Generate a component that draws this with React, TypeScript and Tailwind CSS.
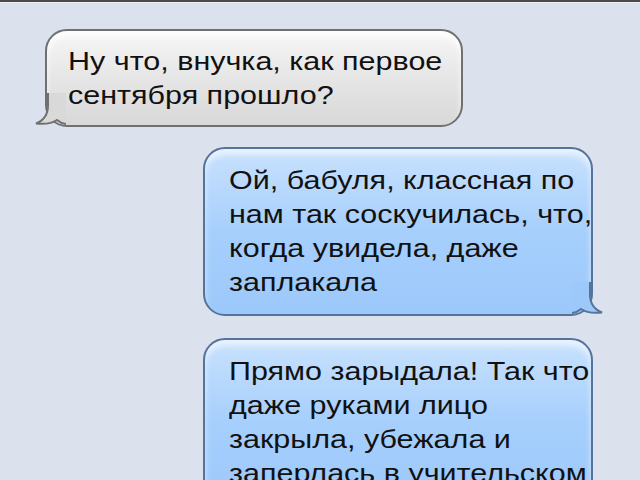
import React from 'react';

const font = { fontFamily: '"Liberation Sans", Arial, sans-serif' };

const GrayTail = () => (
  <svg className="absolute -left-[13px] bottom-0" width="32" height="32" viewBox="0 0 32 32">
    <path d="M14 0 L14 12 Q14 26 2 30.5 Q16 32 23 27 Q27 30.5 32 31 L32 0 Z" fill="#d9d9d9" />
    <path d="M14 0 L14 12 Q14 26 2 30.5 Q16 32 23 27 Q27 30.5 32 31" fill="none" stroke="#707070" strokeWidth="2" />
  </svg>
);

const BlueTail = () => (
  <svg className="absolute -right-[13px] bottom-0" width="32" height="32" viewBox="0 0 32 32">
    <path d="M18 0 L18 12 Q18 26 30 30.5 Q16 32 9 27 Q5 30.5 0 31 L0 0 Z" fill="#9dc8fa" />
    <path d="M18 0 L18 12 Q18 26 30 30.5 Q16 32 9 27 Q5 30.5 0 31" fill="none" stroke="#56739c" strokeWidth="2" />
  </svg>
);

const Lines = ({ lines }: { lines: string[] }) => (
  <div className="origin-left scale-x-[1.22] text-[25px] leading-[34px] text-[#111] whitespace-nowrap" style={font}>
    {lines.map((l, i) => (
      <div key={i}>{l}</div>
    ))}
  </div>
);

export default function App() {
  return (
    <div className="h-[480px] w-[640px] overflow-hidden bg-[#dce2ed]">
      <div className="h-[2px] bg-[#4b4b4b]" />
      <div className="h-[1px] bg-[#eef0f4]" />
      <div className="flex flex-col pt-[26px]">
        {/* incoming */}
        <div className="relative ml-[45px] w-[418px] rounded-[22px] border-2 border-[#707070] bg-gradient-to-b from-[#f6f6f6] via-[#e6e6e6] to-[#d8d8d8] pl-[21px] pt-[13px] pb-[13px] shadow-[inset_0_6px_6px_rgba(255,255,255,0.8)]">
          <Lines lines={['Ну что, внучка, как первое', 'сентября прошло?']} />
          <GrayTail />
        </div>

        {/* outgoing */}
        <div className="relative ml-[203px] mt-[20px] w-[390px] rounded-[22px] border-2 border-[#56739c] bg-gradient-to-b from-[#c8e1fd] via-[#a6cffc] to-[#9cc8fa] pl-[24px] pt-[14px] pb-[15px] shadow-[inset_0_6px_6px_rgba(255,255,255,0.6)]">
          <Lines lines={['Ой, бабуля, классная по', 'нам так соскучилась, что,', 'когда увидела, даже', 'заплакала']} />
          <BlueTail />
        </div>

        <div className="relative ml-[203px] mt-[22px] w-[390px] rounded-[22px] border-2 border-[#56739c] bg-gradient-to-b from-[#c8e1fd] via-[#a6cffc] to-[#9cc8fa] pl-[24px] pt-[14px] pb-[15px] shadow-[inset_0_6px_6px_rgba(255,255,255,0.6)]">
          <Lines lines={['Прямо зарыдала! Так что', 'даже руками лицо', 'закрыла, убежала и', 'заперлась в учительском']} />
        </div>
      </div>
    </div>
  );
}
